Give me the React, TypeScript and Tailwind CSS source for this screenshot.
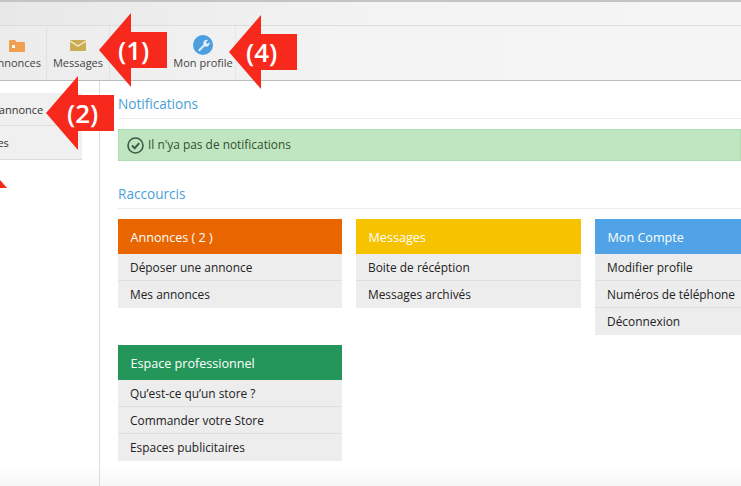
const cards = [
  { title: "Annonces ( 2 )", color: "bg-[#e86500]", items: ["Déposer une annonce", "Mes annonces"] },
  { title: "Messages", color: "bg-[#f7c200]", items: ["Boite de récéption", "Messages archivés"] },
  { title: "Mon Compte", color: "bg-[#4fa3e6]", items: ["Modifier profile", "Numéros de téléphone", "Déconnexion"] },
  { title: "Espace professionnel", color: "bg-[#24965a]", items: ["Qu’est-ce qu’un store ?", "Commander votre Store", "Espaces publicitaires"] },
];

function Arrow({ className, label, labelClass }: { className: string; label: string; labelClass: string }) {
  return (
    <div className={`absolute ${className}`}>
      <svg width="70" height="74" viewBox="0 0 70 74" className="block">
        <polygon points="0,37 32,0 32,19 68,19 68,55 32,55 32,74" fill="#f7291c" />
      </svg>
      <span className={`absolute text-white text-[26px] leading-none font-semibold ${labelClass}`}>{label}</span>
    </div>
  );
}

function Card({ card }: { card: (typeof cards)[number] }) {
  return (
    <div className="self-start">
      <div className={`${card.color} h-[35px] flex items-center pl-[12.5px] pt-[3px] text-white text-[12.6px]`}>{card.title}</div>
      {card.items.map((item, i) => (
        <div key={item} className={`h-[27px] flex items-center pl-3 bg-[#ededed] text-[11.9px] text-[#222] ${i < card.items.length - 1 ? "border-b border-[#dedede] pt-[1px]" : ""}`}>
          {item}
        </div>
      ))}
    </div>
  );
}

function Tool({ label, width, children, offset = "justify-center" }: { label: string; width: string; children: React.ReactNode; offset?: string }) {
  return (
    <div className={`${width} h-full shrink-0 overflow-hidden flex flex-col ${offset === "justify-center" ? "items-center" : "items-end"} pt-[10px]`}>
      <div className="h-[18px] flex items-center justify-center">{children}</div>
      <span className="text-[11px] leading-[14px] mt-[2px] text-[#444] whitespace-nowrap">{label}</span>
    </div>
  );
}

export default function App() {
  return (
    <div className="relative w-[741px] h-[486px] overflow-hidden bg-white" style={{ fontFamily: '"Open Sans", "Noto Sans", sans-serif' }}>
      <div className="h-[2px] bg-[#c4c4c4]" />
      <div className="h-[24px] bg-gradient-to-r from-[#e8e8e8] via-[#f3f3f3] to-[#f5f5f5] border-b border-[#dcdcdc]" />
      <div className="h-[55px] flex bg-gradient-to-r from-[#ececec] via-[#f4f4f4] to-[#f5f5f5] border-b border-[#bdbdbd]">
        <Tool label="Annonces" width="w-[47px] border-r border-[#e2e2e2] pr-[5px]" offset="end">
          <svg width="16" height="13" viewBox="0 0 16 13" className="mr-[16px]">
            <path d="M0 2a1 1 0 0 1 1-1h5l1.500 2H15a1 1 0 0 1 1 1v8a1 1 0 0 1-1 1H1a1 1 0 0 1-1-1z" fill="#f0a050" />
            <rect x="3" y="6" width="3" height="3" fill="#fff" />
          </svg>
        </Tool>
        <Tool label="Messages" width="w-[63px] border-r border-[#e2e2e2]">
          <svg width="16" height="11" viewBox="0 0 16 11">
            <rect width="16" height="11" rx="1" fill="#c9ad50" />
            <path d="M0 1l8 5 8-5" fill="none" stroke="#f4f0dd" strokeWidth="1.200" />
          </svg>
        </Tool>
        <div className="w-[61px] shrink-0" />
        <Tool label="Mon profile" width="w-[65px] border-r border-[#e6e6e6]">
          <svg width="20" height="20" viewBox="0 0 20 20" className="-mt-[1px]">
            <circle cx="10" cy="10" r="10" fill="#4b9fe0" />
            <path d="M5 15l5.500-5.500a3.500 3.500 0 0 1 4.500-4.500l-2.200 2.200 1.800 1.800L16.500 7a3.500 3.500 0 0 1-4.800 4.300L6.500 16.500z" fill="#e3effa" />
          </svg>
        </Tool>
      </div>
      <div className="flex h-[405px] bg-gradient-to-b from-white from-[95%] to-[#f6f6f6]">
        <div className="w-[100px] shrink-0 border-r border-[#dcdcdc] pt-[12px]">
          <div className="w-[82px] overflow-hidden border-b border-[#dcdcdc] bg-[#f0f0f0]">
            <div className="h-[33px] flex items-center pt-[3px] border-b border-[#e0e0e0] text-[11px] text-[#333] whitespace-nowrap -ml-[70px]">Déposer une annonce</div>
            <div className="h-[33px] flex items-center pt-[2px] text-[11px] text-[#333] whitespace-nowrap -ml-[65px]">Mes annonces</div>
          </div>
        </div>
        <div className="flex-1 min-w-0 pl-[18px] pt-[14px]">
          <div className="text-[13.6px] leading-[18px] text-[#4a9fd8] pb-[5px] border-b border-[#ececec]">Notifications</div>
          <div className="mt-[10px] h-[32px] flex items-center gap-[4px] pl-[8px] bg-[#bfe6c1] border border-[#b0dcb3] text-[11.9px] text-[#35502f]">
            <svg width="17" height="17" viewBox="0 0 17 17" fill="none" stroke="#3f5a48" strokeWidth="1.600">
              <circle cx="8.500" cy="8.500" r="7.500" />
              <path d="M5 8.500l2.700 2.700 4.500-5" strokeWidth="2" />
            </svg>
            Il n'ya pas de notifications
          </div>
          <div className="mt-[24px] text-[13.6px] leading-[18px] text-[#4a9fd8] pb-[5px] border-b border-[#ececec]">Raccourcis</div>
          <div className="mt-[10px] grid grid-cols-[224px_225px_224px] gap-x-[14px] gap-y-[10px]">
            <Card card={cards[0]} />
            <Card card={cards[1]} />
            <Card card={cards[2]} />
            <Card card={cards[3]} />
          </div>
        </div>
      </div>
      <Arrow className="left-[99px] top-[13px]" label="(1)" labelClass="left-[19px] top-[24px]" />
      <Arrow className="left-[229px] top-[15px]" label="(4)" labelClass="left-[17px] top-[24px]" />
      <Arrow className="left-[46px] top-[76px]" label="(2)" labelClass="left-[21px] top-[24px]" />
      <svg width="7" height="8" viewBox="0 0 7 8" className="absolute left-0 top-[180px]">
        <polygon points="0,0 7,8 0,8" fill="#f7291c" />
      </svg>
    </div>
  );
}
